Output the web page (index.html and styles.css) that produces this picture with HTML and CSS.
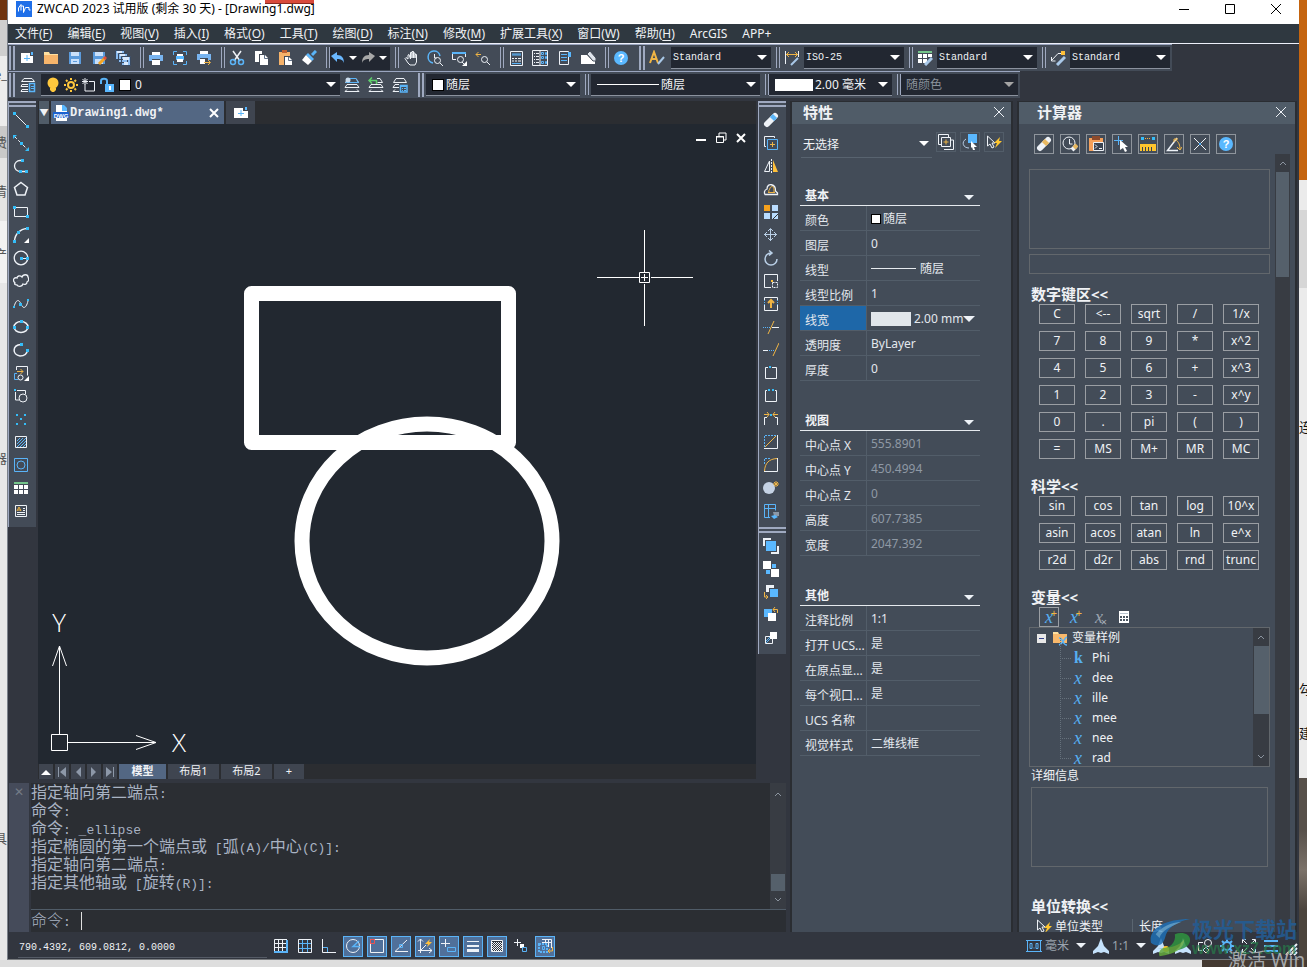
FILE: index.html
```html
<!DOCTYPE html>
<html lang="zh-CN">
<head>
<meta charset="utf-8">
<title>ZWCAD 2023</title>
<link rel="stylesheet" href="styles.css">
</head>
<body>
<div class="edge edge-left" aria-hidden="true">
  <span class="frag f1">e_</span><span class="frag f2">费</span><span class="frag f3">清</span><span class="frag f4">产</span><span class="frag f5">器</span><span class="frag f6">具</span>
</div>
<div class="window">
  <header class="titlebar">
    <svg class="logo" viewBox="0 0 16 16"><rect width="16" height="16" fill="#1f6fe8"/><path d="M2.500 10.500V7l2.500-3.500v6M5 5h2.500v6.500l2-5h3.500v2.500h1.500" stroke="#fff" fill="none"/></svg>
    <h1>ZWCAD 2023 试用版 (剩余 30 天) - [Drawing1.dwg]</h1>
    <span class="redmark"></span>
    <div class="winbtns">
      <button aria-label="最小化"><svg class="i dk" viewBox="0 0 16 16"><path d="M3 8.500h10"/></svg></button>
      <button aria-label="最大化"><svg class="i dk" viewBox="0 0 16 16"><path d="M3.500 3.500h9v9h-9z"/></svg></button>
      <button aria-label="关闭"><svg class="i dk" viewBox="0 0 16 16"><path d="M3 3l10 10M13 3L3 13"/></svg></button>
    </div>
  </header>
  <nav class="menubar">
    <button>文件(<u>F</u>)</button><button>编辑(<u>E</u>)</button><button>视图(<u>V</u>)</button><button>插入(<u>I</u>)</button><button>格式(<u>O</u>)</button><button>工具(<u>T</u>)</button><button>绘图(<u>D</u>)</button><button>标注(<u>N</u>)</button><button>修改(<u>M</u>)</button><button>扩展工具(<u>X</u>)</button><button>窗口(<u>W</u>)</button><button>帮助(<u>H</u>)</button><button>ArcGIS</button><button>APP+</button>
  </nav>

  <div class="toolrow">
    <div class="toolbar">
      <span class="grip"></span>
      <button class="t" aria-label="新建"><svg class="i" viewBox="0 0 16 16"><path class="fw" d="M2 3h9v3h3v7H2z"/><path class="fb" d="M12 2h2v3h-2z"/><path class="b" d="M8 5v6M5 8.500h6"/></svg></button>
      <button class="t" aria-label="打开"><svg class="i" viewBox="0 0 16 16"><path fill="#ffe0a0" stroke="none" d="M1 2h5l1 2h8v2H1z"/><path fill="#f7b56b" stroke="none" d="M1 5h14v9H1z"/></svg></button>
      <button class="t" aria-label="保存"><svg class="i" viewBox="0 0 16 16"><path fill="#5b9bdc" stroke="none" d="M2 2h12v12H2z"/><path fill="#c9e0fa" stroke="none" d="M4 2h8v4H4zM4 9h8v5H4z"/><path stroke="#5b9bdc" d="M6 11.500h4"/></svg></button>
      <button class="t" aria-label="另存为"><svg class="i" viewBox="0 0 16 16"><path fill="#5b9bdc" stroke="none" d="M2 2h12v12H2z"/><path fill="#c9e0fa" stroke="none" d="M4 2h8v4H4zM4 9h8v5H4z"/><path d="M8 14l6-6" stroke="#f5a623" stroke-width="3"/><path d="M13 9l2-2" stroke="#e05040" stroke-width="3"/></svg></button>
      <button class="t" aria-label="全部保存"><svg class="i" viewBox="0 0 16 16"><path fill="#8bbcf0" stroke="#3a4a60" d="M.5.5h9v9h-9zM3.500 3.500h9v9h-9zM6.500 6.500h9v9h-9z"/><path fill="#dcebfc" stroke="none" d="M2 1h5v2H2zM5 4h5v2H5zM8 7h6v3H8zM9 12h4v3H9z"/></svg></button>
      <span class="sep"></span>
      <button class="t" aria-label="打印"><svg class="i" viewBox="0 0 16 16"><path class="fw" d="M4 2h8v3H4zM4 10h8v5H4z"/><path fill="#78b4f0" stroke="none" d="M1 5h14v6h-3V9H4v2H1z"/></svg></button>
      <button class="t" aria-label="打印预览"><svg class="i" viewBox="0 0 16 16"><path class="b" d="M1.500 5V1.500H5M11 1.500h3.500V5M14.500 11v3.500H11M5 14.500H1.500V11"/><path class="fw" d="M5 4h6v2H5zM5 9h6v3H5z"/><path class="fb" d="M4 6h8v4h-1V9H5v1H4z"/></svg></button>
      <button class="t" aria-label="发布"><svg class="i" viewBox="0 0 16 16"><path class="fw" d="M4 1h8v3H4zM4 9h5v5H4z"/><path fill="#78b4f0" stroke="none" d="M1 4h14v6h-3V8H4v2H1z"/><path class="o" d="M8 12.500h6M12 10l2.500 2.500L12 15"/></svg></button>
      <span class="sep"></span>
      <button class="t" aria-label="剪切"><svg class="i" viewBox="0 0 16 16"><path d="M4 1l7 10M12 1L5 11" stroke-width="1.500"/><circle class="b" cx="4" cy="12" r="2.500" stroke-width="1.500"/><circle class="b" cx="12" cy="12" r="2.500" stroke-width="1.500"/></svg></button>
      <button class="t" aria-label="复制"><svg class="i" viewBox="0 0 16 16"><path class="fw" d="M2 1h7v3H6v8H2zM7 5h5l3 3v7H7z"/><path stroke="#64748a" d="M11.500 5v3.500H15"/></svg></button>
      <button class="t" aria-label="粘贴"><svg class="i" viewBox="0 0 16 16"><path fill="#f5b26a" stroke="none" d="M2 2h11v4H7v9H2z"/><path fill="#c06030" stroke="none" d="M5 0h5v3H5z"/><path class="fw" d="M8 7h4l3 3v5H8z"/><path stroke="#64748a" d="M11.500 7v3.500H15"/></svg></button>
      <button class="t" aria-label="特性匹配"><svg class="i" viewBox="0 0 16 16"><path d="M15 1l-4 4" class="b" stroke-width="3"/><path class="fb" d="M7 3l6 6-2 2-6-6z"/><path class="fw" d="M5 5l6 6-4 4-6-5z"/></svg></button>
      <span class="sep"></span>
      <div class="undo">
        <button aria-label="撤销"><svg class="i" viewBox="0 0 16 16"><path fill="#69b7ff" stroke="none" d="M1 6l6-4v3c5 0 7 3 7 8-1-3-3-4-7-4v3z"/></svg></button><button aria-label="撤销列表" class="tri"></button>
        <button aria-label="重做"><svg class="i" viewBox="0 0 16 16"><path fill="#a8a8a8" stroke="none" d="M15 6L9 2v3C4 5 2 8 2 13c1-3 3-4 7-4v3z"/></svg></button><button aria-label="重做列表" class="tri"></button>
      </div>
      <span class="sep"></span>
      <button class="t" aria-label="平移"><svg class="i" viewBox="0 0 16 16"><path d="M5 9L3 7.500l-1 1L5 13l2 2h5l1.500-3V4.500H12V8 3h-1.500v5V1.500H9V8 2.500H7.500V9L6 4.500 5 5z"/></svg></button>
      <button class="t" aria-label="实时缩放"><svg class="i" viewBox="0 0 16 16"><path class="b" d="M6 13A6 6 0 1 1 13 6" stroke-width="1.500"/><path d="M7.500 4v4h2"/><circle cx="10.500" cy="10.500" r="3"/><path d="M13 13l3 3"/></svg></button>
      <button class="t" aria-label="窗口缩放"><svg class="i" viewBox="0 0 16 16"><path class="b" d="M1 2.500h14M1 3.500h14"/><path d="M1.500 4v5.500H5M14.500 4v3"/><circle cx="9.500" cy="9.500" r="3"/><path d="M11 12l3 3"/><path class="fw" d="M16 11v5h-5z"/></svg></button>
      <button class="t" aria-label="上一视图"><svg class="i" viewBox="0 0 16 16"><path class="o" d="M1 4.500h5M3.500 2L1 4.500 3.500 7"/><circle cx="9.500" cy="9.500" r="3"/><path d="M12 12l3 3"/></svg></button>
      <span class="sep"></span>
      <button class="t" aria-label="特性"><svg class="i" viewBox="0 0 16 16"><path d="M2.500 1.500h12v14h-12z"/><path class="b" d="M4 4h9M4 5h9M4 13.500h9" /><path d="M4 8.500h2m1 0h2m1 0h3M4 11h2m1 0h2m1 0h3"/></svg></button>
      <button class="t" aria-label="设计中心"><svg class="i" viewBox="0 0 16 16"><path d="M.5.500h15v15H.5zM8 1v14"/><path d="M2 3.500h1m1 0h3M2 6.500h1m1 0h3M2 9.500h1m1 0h3M2 12.500h1m1 0h3"/><path class="b" d="M9.500 2.500v2h2v-2zM13.500 2.500v2h1v-2zM9.500 6.500v2h2v-2zM13.500 6.500v2h1v-2zM9.500 11.500v2h2v-2zM13.500 11.500v2h1v-2z"/></svg></button>
      <button class="t" aria-label="工具选项板"><svg class="i" viewBox="0 0 16 16"><path d="M3.500 1.500h9v13h-9z"/><path class="fb" d="M12 2h3v5h-3z"/><path class="b" d="M5 4.500h6M5 7.500h6M5 10.500h6"/></svg></button>
      <button class="t" aria-label="图纸集"><svg class="i" viewBox="0 0 16 16"><path class="fw" d="M1 5h6l5 5h3v4H1z"/><path fill="#dfe5ec" stroke="#434b57" d="M7 4l3-3 6 7v3h-3z"/></svg></button>
      <span class="sep"></span>
      <button class="t" aria-label="帮助"><svg class="i" viewBox="0 0 16 16"><circle class="fb" cx="8" cy="8" r="7"/><text x="8" y="12" class="q">?</text></svg></button>
      <span class="grip mid"></span>
      <span class="t"><svg class="i" viewBox="0 0 16 16"><path d="M1 13L5 2l4 11M3 9h5" class="o" stroke-width="2"/><path d="M9 14l6-7" stroke="#a9c8e8" stroke-width="2"/></svg></span>
      <label class="combo mono"><select aria-label="文字样式"><option>Standard</option></select></label>
      <span class="sep"></span>
      <span class="t"><svg class="i" viewBox="0 0 16 16"><path d="M1.500 1v13M14.500 1v6"/><path class="o" d="M2 4.500h12M5 2L2.500 4.500 5 7M11 2l2.500 2.500L11 7"/><path d="M7 15l7-7" stroke="#a9c8e8" stroke-width="2"/></svg></span>
      <label class="combo mono"><select aria-label="标注样式"><option>ISO-25</option></select></label>
      <span class="sep"></span>
      <span class="t"><svg class="i" viewBox="0 0 16 16"><path stroke="#74c48a" stroke-width="2" d="M1 2h14"/><path class="fw" d="M1 4h4v4H1zM6 4h4v4H6zM11 4h4v3h-4zM1 9h4v4H1zM6 9h4v4H6z"/><path d="M8 15l7-7" stroke="#a9c8e8" stroke-width="3"/></svg></span>
      <label class="combo mono"><select aria-label="表格样式"><option>Standard</option></select></label>
      <span class="sep"></span>
      <span class="t"><svg class="i" viewBox="0 0 16 16"><path class="fo" d="M11 1h4v4h-4z"/><path d="M11 3.500H8L2 10M1.500 7v4h4"/><path d="M7 15l8-8" stroke="#a9c8e8" stroke-width="3"/></svg></span>
      <label class="combo mono"><select aria-label="多重引线样式"><option>Standard</option></select></label>
    </div>
  </div>

  <div class="toolrow">
    <div class="toolbar">
      <span class="grip"></span>
      <button class="t w26" aria-label="图层特性"><svg class="i" viewBox="0 0 16 16"><path d="M4 1.500h8l2.500 3h-13zM8 7.500H2l-1 2h7M8 12.500H2l-1 2h7"/><path class="b" d="M9.500 6.500h5v8h-5z" stroke-width="1.500"/><path class="b" d="M11 9.500h3M11 11.500h3"/></svg></button>
      <div class="combo layer">
        <svg class="i" viewBox="0 0 16 16"><circle cx="8" cy="6" r="5.500" fill="#ffc83d" stroke="none"/><path d="M5 11h6v2l-2 2H7l-2-2z" fill="#ffc83d" stroke="none"/></svg>
        <svg class="i" viewBox="0 0 16 16"><circle cx="8" cy="8" r="3" stroke="#ffc83d" stroke-width="2"/><path stroke="#ffc83d" stroke-width="2" d="M8 1v2M8 13v2M1 8h2M13 8h2M3 3l1.500 1.500M11.500 11.500L13 13M13 3l-1.500 1.500M3 13l1.500-1.500"/></svg>
        <svg class="i" viewBox="0 0 16 16"><path d="M4 7.500V14h9.500V4.500H8M1 4.500h6M4 1v7M1.500 2l5 5M6.500 2l-5 5"/></svg>
        <svg class="i" viewBox="0 0 16 16"><path class="b" stroke-width="2" d="M2 7V4c0-3 6-3 6 0v3"/><path class="fb" d="M6 7h9v8H6z"/><path class="fw" d="M10 9h2v4h-2z"/></svg>
        <i class="swatch"></i>
        <select aria-label="图层"><option>0</option></select>
      </div>
      <button class="t" aria-label="图层置为当前"><svg class="i" viewBox="0 0 16 16"><path d="M4 1.500h8l2.500 4h-13zM1 10.500h14l-2-3H3zM3 12.500l-2 2h14l-2-2"/><path class="b" d="M5 1.500h7l2.500 4h-13"/><circle cx="4" cy="3" r="2.500" fill="#cde" stroke="none"/></svg></button>
      <button class="t" aria-label="上一图层"><svg class="i" viewBox="0 0 16 16"><path d="M9 1.500h3l2.500 4h-5M1 10.500h14l-2-3H3zM3 12.500l-2 2h14l-2-2"/><path stroke="#5fd06c" stroke-width="1.500" d="M1 3.500h7.500V7M4 .500l-3 3 3 3"/></svg></button>
      <button class="t" aria-label="图层状态"><svg class="i" viewBox="0 0 16 16"><path d="M4 1.500h8l2.500 4h-13zM7 7.500H3l-2 3h6M3 12.500l-2 2h6"/><path class="b" stroke-width="1.500" d="M8.500 8.500h6.500v6.500H8.500z"/><path class="b" d="M8 9.500h7M10 11.500h1m1 0h2M10 13.500h1m1 0h2"/></svg></button>
      <span class="grip mid"></span>
      <label class="combo cjk c154"><i class="swatch"></i><select aria-label="颜色"><option>随层</option></select></label>
      <span class="sep"></span>
      <label class="combo cjk c169"><i class="ltype"></i><select aria-label="线型"><option>随层</option></select></label>
      <span class="sep"></span>
      <label class="combo cjk c123"><i class="lwt"></i><select aria-label="线宽"><option>2.00 毫米</option></select></label>
      <span class="sep"></span>
      <label class="combo cjk c117 off"><select aria-label="打印样式" disabled><option>随颜色</option></select></label>
    </div>
  </div>

  <main class="main">
    <section class="left">
      <div class="work">
        <div class="vbar" role="toolbar" aria-label="绘图">
          <span class="hgrip"></span>
          <button aria-label="直线"><svg class="i" viewBox="0 0 16 16"><path d="M2 2l12 12"/><path class="fc" d="M0 0h3v3H0zM13 13h3v3h-3z"/></svg></button>
          <button aria-label="构造线"><svg class="i" viewBox="0 0 16 16"><path d="M1 1l14 14" stroke-dasharray="4 2"/><path class="fc" d="M0 0h4L0 4zM16 16h-4l4-4zM7 7h3v3H7z"/></svg></button>
          <button aria-label="多段线"><svg class="i" viewBox="0 0 16 16"><path d="M10 2.500H7a5 5 0 0 0 0 11h7" stroke-width="1.300"/><path class="fc" d="M8 1h3v3H8zM6 12h3v3H6zM12 12h3v3h-3z"/></svg></button>
          <button aria-label="多边形"><svg class="i" viewBox="0 0 16 16"><path d="M8 1.500L14.500 6.500 12 14H4L1.500 6.500z" stroke-width="1.500"/></svg></button>
          <button aria-label="矩形"><svg class="i" viewBox="0 0 16 16"><path d="M1.500 3.500h13v9h-13z"/><path class="fc" d="M0 2h3v3H0zM13 11h3v3h-3z"/></svg></button>
          <button aria-label="圆弧"><svg class="i" viewBox="0 0 16 16"><path d="M1.500 14C2 7 7 2 14 1.500" stroke-width="1.500"/><path class="fc" d="M0 13h3v3H0zM4 4h3v3H4zM13 0h3v3h-3z"/><path class="fw" d="M16 11v5h-5z"/></svg></button>
          <button aria-label="圆"><svg class="i" viewBox="0 0 16 16"><circle cx="8" cy="8" r="6.800" stroke-width="1.300"/><path d="M8 8.500h6"/><path class="fc" d="M7 7h3v3H7zM13 7h3v3h-3z"/></svg></button>
          <button aria-label="修订云线"><svg class="i" viewBox="0 0 16 16"><path stroke-width="1.300" d="M2 10C-1 7 1 4 4 5c0-2 3-3 5-1 1-3 6-3 6 0 1 2 1 4-1 5 0 2-2 3-4 2-1 3-5 3-6 1-2 0-3-1-2-2z"/></svg></button>
          <button aria-label="样条曲线"><svg class="i" viewBox="0 0 16 16"><path d="M1 11C3 3 6 3 8 8s5 5 7-3"/><path class="fc" d="M0 10h2v2H0zM6 7h3v3H6zM14 3h2v2h-2z"/></svg></button>
          <button aria-label="椭圆"><svg class="i" viewBox="0 0 16 16"><ellipse cx="8" cy="8" rx="7" ry="5.500" stroke-width="1.500"/><path class="fc" d="M7 1h3v3H7zM0 7h3v3H0zM13 7h3v3h-3z"/></svg></button>
          <button aria-label="椭圆弧"><svg class="i" viewBox="0 0 16 16"><path d="M8 2.500C-1 3-1 13 7 14c4 0 7-2 7.500-6" stroke-width="1.500"/><path class="fc" d="M7 1h3v3H7zM13 7h3v3h-3z"/></svg></button>
          <button aria-label="插入块"><svg class="i" viewBox="0 0 16 16"><path d="M3.500 5V1.500h11v9"/><path class="b" d="M4 8.500H1.500v6H5"/><path class="o" d="M4 6.500h6M7.500 4L10 6.500 7.500 9"/><circle cx="7.500" cy="12.500" r="2.500"/><path class="fw" d="M16 11v5h-5z"/></svg></button>
          <button aria-label="创建块"><svg class="i" viewBox="0 0 16 16"><path d="M2.500 4v8H6M4 2.500h8.500V6"/><circle cx="10" cy="10" r="4"/><path class="fc" d="M1 1h2v2H1z"/></svg></button>
          <button aria-label="点"><svg class="i" viewBox="0 0 16 16"><path class="fc" d="M3 3h2v2H3zM11 3h2v2h-2zM7 7h2v2H7zM3 12h2v2H3zM11 12h2v2h-2z"/></svg></button>
          <button aria-label="图案填充"><svg class="i" viewBox="0 0 16 16"><path class="b" d="M4 7l3-3M4 10l6-6M4 13l9-9M7 13l6-6M10 13l3-3"/><path d="M2.500 2.500h11v11h-11z"/></svg></button>
          <button aria-label="面域"><svg class="i" viewBox="0 0 16 16"><path class="b" d="M1.500 1.500h13v13h-13z"/><circle class="b" cx="8" cy="8" r="4"/></svg></button>
          <button aria-label="表格"><svg class="i" viewBox="0 0 16 16"><path stroke="#74c48a" stroke-width="2" d="M1 3h14"/><path class="fw" d="M1 5h4v4H1zM6 5h4v4H6zM11 5h4v4h-4zM1 10h4v4H1zM6 10h4v4H6zM11 10h4v4h-4z"/></svg></button>
          <button aria-label="多行文字"><svg class="i" viewBox="0 0 16 16"><path d="M2.500 2.500h11v11h-11z"/><path class="o" d="M4 8l2-4 2 4M5 7h3" /><path d="M10 5.500h2M10 7.500h2M4 9.500h8M4 11.500h8"/></svg></button>
        </div>

        <div class="doc">
          <div class="doctabs">
            <button class="dlist" aria-label="文档列表">▼</button>
            <div class="dtab"><svg class="i" viewBox="0 0 16 16"><path class="fw" d="M3 0h7l4 4v12H3z"/><path class="fb" d="M9 0h2l3 3v3H9z"/><path fill="#1c62d0" stroke="none" d="M0 7h16v6H0z"/><text x="8" y="12.500" class="dwg">DWG</text></svg><span>Drawing1.dwg*</span><button aria-label="关闭文档"><svg class="i" viewBox="0 0 16 16"><path stroke="#fff" stroke-width="2" d="M4 4l8 8M12 4l-8 8"/></svg></button></div>
            <button class="dnew" aria-label="新建文档"><svg class="i" viewBox="0 0 16 16"><path class="fw" d="M1 3h9v3h5v7H1z"/><path class="fb" d="M12 2h2v3h-2z"/><path class="b" d="M8 5v6M5 8.500h6"/></svg></button>
          </div>
          <div class="canvas">
            <svg class="drawing" role="img" aria-label="绘图区">
              <rect x="213.500" y="169.500" width="257" height="149" stroke-width="15" stroke-linejoin="round"/>
              <ellipse cx="389" cy="417" rx="125" ry="117" stroke-width="15"/>
              <path d="M559 153.500h42M613 153.500h42M606.500 106v42M606.500 160v42M601.500 148.500h10v10h-10zM603 153.500h7M606.500 150v7"/>
              <path d="M13.500 610.500h16v16h-16zM21.500 610v-88M14.500 542l7-20 7 20M30 618.500h88M98 611.500l20 7-20 7"/>
              <text x="21" y="508">Y</text><text x="141" y="628">X</text>
            </svg>
            <div class="mdi">
              <button aria-label="最小化视口"><svg class="i" viewBox="0 0 16 16"><path stroke="#fff" stroke-width="2" d="M3 10h10"/></svg></button>
              <button aria-label="还原视口"><svg class="i" viewBox="0 0 16 16"><path stroke="#fff" d="M6 6V3h7v7h-2M3 6.500h7.500v6H3.500V6M3 7h8"/></svg></button>
              <button aria-label="关闭视口"><svg class="i" viewBox="0 0 16 16"><path stroke="#fff" stroke-width="2" d="M4 4l8 8M12 4l-8 8"/></svg></button>
            </div>
          </div>
          <div class="layouts">
            <button class="s" aria-label="展开"><svg class="i" viewBox="0 0 16 16"><path class="fw" d="M3 11l5-5 5 5z"/></svg></button>
            <button class="s g" aria-label="首个"><svg class="i" viewBox="0 0 16 16"><path d="M4.500 3v10"/><path class="fg" d="M12 3v10L6 8z"/></svg></button>
            <button class="s g" aria-label="上一个"><svg class="i" viewBox="0 0 16 16"><path class="fg" d="M11 3v10L6 8z"/></svg></button>
            <button class="s g" aria-label="下一个"><svg class="i" viewBox="0 0 16 16"><path class="fg" d="M5 3v10l5-5z"/></svg></button>
            <button class="s g" aria-label="末个"><svg class="i" viewBox="0 0 16 16"><path d="M11.500 3v10"/><path class="fg" d="M4 3v10l6-5z"/></svg></button>
            <button class="lt on">模型</button><button class="lt">布局1</button><button class="lt">布局2</button><button class="lt plus">+</button>
          </div>
        </div>

        <div class="vcol">
          <div class="vbar" role="toolbar" aria-label="修改">
            <span class="hgrip"></span>
            <button aria-label="删除"><svg class="i" viewBox="0 0 16 16"><path d="M4 12l8-8" stroke-width="6" stroke-linecap="round"/><path class="b" d="M9 7l3-3" stroke-width="6"/></svg></button>
            <button aria-label="复制对象"><svg class="i" viewBox="0 0 16 16"><path d="M3 11.500H1.500v-10h10V3"/><path class="b" d="M4.500 4.500h10v10h-10z"/><path class="o" d="M9.500 7v5M7 9.500h5"/></svg></button>
            <button aria-label="镜像"><svg class="i" viewBox="0 0 16 16"><path d="M6.500 3v10.500h-5z"/><path d="M8.500 1v14" stroke-dasharray="2 1"/><path class="fo" d="M10 2v12h5z"/></svg></button>
            <button aria-label="偏移"><svg class="i" viewBox="0 0 16 16"><path stroke-width="1.300" d="M2 13.500h12.500V12l-2-2C13 3 4 1 4 8c-3 1-3 4-2 5.500z"/><path class="o" d="M5 11.500h7M6 11c-1-2 1-2 1-4 1-2 4-2 4 1v3"/></svg></button>
            <button aria-label="阵列"><svg class="i" viewBox="0 0 16 16"><path fill="#f5a11d" stroke="none" d="M1 1h6v6H1z"/><path fill="#b9dcff" stroke="none" d="M9 1h6v6H9zM1 9h6v6H1zM9 9h6v6H9z"/><path stroke="#333" d="M10 15l5-5"/></svg></button>
            <button aria-label="移动"><svg class="i" viewBox="0 0 16 16"><path class="l" d="M7.500 2v12M1 7.500h13M5 4l2.500-2.500L10 4M5 11l2.500 2.500L10 11M4 5L1.500 7.500 4 10M11 5l2.500 2.500L11 10"/></svg></button>
            <button aria-label="旋转"><svg class="i" viewBox="0 0 16 16"><path class="l" stroke-width="1.500" d="M8 3a6 6 0 1 0 6 6M6 .500L9 3 6 5.500"/></svg></button>
            <button aria-label="缩放"><svg class="i" viewBox="0 0 16 16"><path d="M8 14.500H1.500v-13h13V8"/><path d="M9.500 9.500h5v5h-5z" stroke-dasharray="2 1"/><path class="fo" d="M8 7h2v2H8z"/></svg></button>
            <button aria-label="拉伸"><svg class="i" viewBox="0 0 16 16"><path d="M1.500 4V1.500h13V4M1.500 9v5.500h13V9"/><path class="b" stroke-dasharray="1 1" d="M1.500 4v5M14.500 4v5"/><path class="o" stroke-width="2" d="M8 12V5M5 7l3-3 3 3"/></svg></button>
            <button aria-label="修剪"><svg class="i" viewBox="0 0 16 16"><path class="b" stroke-dasharray="1 1" d="M0 8.500h7"/><path d="M9 8.500h7"/><path class="o" d="M5 15l6-13"/></svg></button>
            <button aria-label="延伸"><svg class="i" viewBox="0 0 16 16"><path d="M0 8.500h5"/><path class="b" stroke-dasharray="1 1" d="M6 8.500h5"/><path class="o" d="M10 14l6-13"/></svg></button>
            <button aria-label="打断于点"><svg class="i" viewBox="0 0 16 16"><path d="M5 2.500H2.500v11h11v-11H9"/><path class="fc" d="M6 1h2v2H6z"/></svg></button>
            <button aria-label="打断"><svg class="i" viewBox="0 0 16 16"><path d="M4 2.500H2.500v11h11v-11H12"/><path class="fc" d="M5 1h2v2H5zM9 1h2v2H9z"/></svg></button>
            <button aria-label="合并"><svg class="i" viewBox="0 0 16 16"><path d="M1.500 14V6.500H4M14.500 14V6.500H12"/><path class="o" d="M1 3.500h5M4 1l2 2.500L4 6M15 3.500h-5M12 1l-2 2.500L12 6"/><path class="fc" d="M7 3h2v2H7z"/></svg></button>
            <button aria-label="倒角"><svg class="i" viewBox="0 0 16 16"><path d="M14.500 1v13.500H1"/><path class="b" stroke-dasharray="2 1" d="M1.500 13V1.500H14"/><path class="o" d="M2 13L13 2"/></svg></button>
            <button aria-label="圆角"><svg class="i" viewBox="0 0 16 16"><path d="M14.500 1v13.500H1"/><path class="b" stroke-dasharray="2 1" d="M1.500 7V1.500H7"/><path class="o" d="M1.500 14C2 6 6 2 14 1.500"/></svg></button>
            <button aria-label="分解"><svg class="i" viewBox="0 0 16 16"><circle cx="6" cy="8" r="6" fill="#c5d2e4" stroke="none"/><path class="o" d="M13 1v6M10 4h6M11 2l4 4M15 2l-4 4"/></svg></button>
            <button aria-label="编辑阵列"><svg class="i" viewBox="0 0 16 16"><path class="b" d="M1.500 1.500h11v6M1.500 1.500v13H7M5.500 2v12M2 5.500h10"/><path fill="#8d98a6" stroke="none" d="M10 9h6v4h-5z"/><path class="fb" d="M8 13l4-1 3 2-4 2z"/></svg></button>
          </div>
          <div class="vbar" role="toolbar" aria-label="绘图顺序">
            <span class="hgrip"></span>
            <button aria-label="前置"><svg class="i" viewBox="0 0 16 16"><path stroke-width="2" d="M8 1H1v7M15 8v7H8"/><path class="fb" d="M3 3h10v10H3z"/></svg></button>
            <button aria-label="后置"><svg class="i" viewBox="0 0 16 16"><path class="fw" d="M0 0h8v8H0zM8 8h8v8H8z"/><path class="fb" d="M9 3h4v4H9zM3 9h4v4H3z"/></svg></button>
            <button aria-label="置于对象之上"><svg class="i" viewBox="0 0 16 16"><path stroke-width="3" d="M11 2.500H4.500V8"/><path class="fb" d="M7 5h8v8H7z"/><path class="o" d="M1.500 8v5H5M3 11l2 2-2 2"/></svg></button>
            <button aria-label="置于对象之下"><svg class="i" viewBox="0 0 16 16"><path class="fb" d="M1 2h8v8H1z"/><path class="fw" d="M5 6h8v8H5z"/><path class="o" d="M14.500 6V2.500H10M12 0l-2 2.500L12 5"/></svg></button>
            <button aria-label="注释前置"><svg class="i" viewBox="0 0 16 16"><path d="M2.500 6.500h7v7h-7z"/><path class="b" d="M3 11l4-4M3 13l6-6"/><path class="fw" d="M7 2h7v7H7z"/></svg></button>
          </div>
        </div>
      </div>

      <div class="command">
        <button class="cclose" aria-label="关闭命令行">✕</button>
        <div class="cbody">
          <div class="chist">
            <p>指定轴向第二端点<b>:</b></p>
            <p>命令<b>:</b></p>
            <p>命令<b>: _ellipse</b></p>
            <p>指定椭圆的第一个端点或<b> [</b>弧<b>(A)/</b>中心<b>(C)]:</b></p>
            <p>指定轴向第二端点<b>:</b></p>
            <p>指定其他轴或<b> [</b>旋转<b>(R)]:</b></p>
          </div>
          <div class="cscroll"><svg class="i" viewBox="0 0 16 16"><path d="M5 10l3-3 3 3"/></svg><span></span><svg class="i" viewBox="0 0 16 16"><path d="M5 6l3 3 3-3"/></svg></div>
          <div class="cprompt"><label for="cmd">命令<b>:</b></label><i class="caret"></i><input id="cmd" type="text"></div>
        </div>
      </div>
    </section>

    <section class="panel props">
      <header><h2>特性</h2><button aria-label="关闭特性"><svg class="i" viewBox="0 0 16 16"><path d="M3 3l10 10M13 3L3 13"/></svg></button></header>
      <div class="selrow">
        <label class="combo plain"><select aria-label="选择"><option>无选择</option></select></label>
        <button aria-label="切换添加"><svg class="i" viewBox="0 0 16 16"><path d="M3 10.500H.5v-10h10V3M6 15.500h9.500V6H13"/><path d="M3.500 3.500h9v9h-9z"/><path class="o" d="M8 5.500v5M5.500 8h5"/></svg></button>
        <button aria-label="选择对象"><svg class="i" viewBox="0 0 16 16"><path class="fb" d="M6 0h9v9H6z"/><path class="l" d="M4 5c-5 3-3 9 3 9"/><path class="fw" d="M9 7l6 6h-3l1 3h-2l-1-3-1 1z"/></svg></button>
        <button aria-label="快速选择"><svg class="i" viewBox="0 0 16 16"><path d="M1.500 2v10l2.500-2 2 4 2-1-2-4h3z"/><path fill="#ffc62e" stroke="none" d="M14 3L8 9h3l-2 5 7-7h-3z"/></svg></button>
      </div>
      <div class="sect first"><h3>基本</h3><button class="tri" aria-label="折叠基本"></button></div>
      <table>
        <tr><th>颜色</th><td><i class="swatch"></i>随层</td></tr>
        <tr><th>图层</th><td>0</td></tr>
        <tr><th>线型</th><td><i class="pline"></i>随层</td></tr>
        <tr><th>线型比例</th><td>1</td></tr>
        <tr><th class="sel">线宽</th><td class="lw"><i class="pwt"></i>2.00 mm<i class="tri"></i></td></tr>
        <tr><th>透明度</th><td>ByLayer</td></tr>
        <tr><th>厚度</th><td>0</td></tr>
      </table>
      <div class="sect"><h3>视图</h3><button class="tri" aria-label="折叠视图"></button></div>
      <table class="dim">
        <tr><th>中心点 X</th><td>555.8901</td></tr>
        <tr><th>中心点 Y</th><td>450.4994</td></tr>
        <tr><th>中心点 Z</th><td>0</td></tr>
        <tr><th>高度</th><td>607.7385</td></tr>
        <tr><th>宽度</th><td>2047.392</td></tr>
      </table>
      <div class="sect"><h3>其他</h3><button class="tri" aria-label="折叠其他"></button></div>
      <table>
        <tr><th>注释比例</th><td>1:1</td></tr>
        <tr><th>打开 UCS...</th><td>是</td></tr>
        <tr><th>在原点显...</th><td>是</td></tr>
        <tr><th>每个视口...</th><td>是</td></tr>
        <tr><th>UCS 名称</th><td></td></tr>
        <tr><th>视觉样式</th><td>二维线框</td></tr>
      </table>
    </section>

    <section class="panel calc">
      <header><h2>计算器</h2><button aria-label="关闭计算器"><svg class="i" viewBox="0 0 16 16"><path d="M3 3l10 10M13 3L3 13"/></svg></button></header>
      <div class="calcrow">
        <div class="calcbody">
          <div class="cbtns">
            <button aria-label="清除"><svg class="i" viewBox="0 0 16 16"><path d="M4 12l8-8" stroke-width="6" stroke-linecap="round"/><path d="M8 8l3-3" stroke="#e8b860" stroke-width="6"/></svg></button>
            <button aria-label="清除历史"><svg class="i" viewBox="0 0 16 16"><circle cx="7" cy="7" r="6"/><path d="M7.500 3v5h3"/><path d="M10 14l4-4" stroke-width="4"/><path d="M12 12l3-3" stroke="#e8b860" stroke-width="4"/></svg></button>
            <button aria-label="粘贴到命令行"><svg class="i" viewBox="0 0 16 16"><path fill="#f5a05a" stroke="none" d="M1 2h14v13H1z"/><path fill="#8c4a2c" stroke="none" d="M4 0h8v4H4z"/><path fill="#3a4452" d="M5.500 6.500h10v8h-10z"/><path d="M7 8.500l2 2-2 2M11 12.500h3"/></svg></button>
            <button aria-label="获取坐标"><svg class="i" viewBox="0 0 16 16"><path class="b" d="M4.500 0v9M0 4.500h9"/><path class="fw" d="M6 4l8 7h-3l2 4-2 1-2-4-3 2z"/></svg></button>
            <button aria-label="两点距离"><svg class="i" viewBox="0 0 16 16"><path class="fc" d="M1 1h3v3H1zM12 1h3v3h-3z"/><path class="o" stroke-dasharray="1 1" d="M5 2.500h6"/><path fill="#ffc62e" stroke="none" d="M0 8h16v7H0z"/><path stroke="#384250" d="M2.500 11v4M5.500 11v4M8.500 11v4M11.500 11v4"/></svg></button>
            <button aria-label="角度"><svg class="i" viewBox="0 0 16 16"><path d="M11 2L1.500 14.500H12" stroke-width="1.500"/><path class="o" d="M9 3.500c4 2 5 6 5 10M8 6V3h4M11 11l3 3 2-3"/></svg></button>
            <button aria-label="交点"><svg class="i" viewBox="0 0 16 16"><path d="M2 2l12 12M14 2L2 14"/><path class="fb" d="M7 7h2v2H7z"/></svg></button>
            <button aria-label="计算器帮助"><svg class="i" viewBox="0 0 16 16"><circle class="fb" cx="8" cy="8" r="7"/><text x="8" y="12" class="q">?</text></svg></button>
          </div>
          <textarea class="box hist" aria-label="历史"></textarea>
          <input class="box expr" type="text" aria-label="表达式">
          <h3>数字键区&lt;&lt;</h3>
          <div class="keys">
            <button>C</button><button>&lt;--</button><button>sqrt</button><button>/</button><button>1/x</button>
            <button>7</button><button>8</button><button>9</button><button>*</button><button>x^2</button>
            <button>4</button><button>5</button><button>6</button><button>+</button><button>x^3</button>
            <button>1</button><button>2</button><button>3</button><button>-</button><button>x^y</button>
            <button>0</button><button>.</button><button>pi</button><button>(</button><button>)</button>
            <button>=</button><button>MS</button><button>M+</button><button>MR</button><button>MC</button>
          </div>
          <h3 class="gap">科学&lt;&lt;</h3>
          <div class="keys">
            <button>sin</button><button>cos</button><button>tan</button><button>log</button><button>10^x</button>
            <button>asin</button><button>acos</button><button>atan</button><button>ln</button><button>e^x</button>
            <button>r2d</button><button>d2r</button><button>abs</button><button>rnd</button><button>trunc</button>
          </div>
          <h3 class="gap">变量&lt;&lt;</h3>
          <div class="vbtns">
            <button class="on" aria-label="新建变量"><em>x</em><sup>+</sup></button><button aria-label="编辑变量"><em>x</em><sup>+</sup></button><button class="dis" aria-label="删除变量"><em>x</em><sub>×</sub></button>
            <button aria-label="返回变量"><svg class="i" viewBox="0 0 16 16"><path class="fw" d="M3 2h10v12H3z"/><path stroke="#4a5560" stroke-width="2" stroke-dasharray="2 1" d="M4 8h8M4 11h8"/><path stroke="#b9c4cf" d="M4 4.500h8"/></svg></button>
          </div>
          <div class="tree">
            <ul>
              <li class="root"><i class="minus"></i><svg class="i" viewBox="0 0 16 16"><path fill="#ffe0a0" stroke="none" d="M1 2h5l1 2H1z"/><path fill="#f9b96c" stroke="none" d="M1 4h14v9H1z"/><path class="b" stroke-width="1.500" d="M7 8c4-1 3 7 8 7M15 7c-3 1-4 7-8 8"/></svg>变量样例</li>
              <li><em class="k">k</em>Phi</li><li><em>x</em>dee</li><li><em>x</em>ille</li><li><em>x</em>mee</li><li><em>x</em>nee</li><li><em>x</em>rad</li>
            </ul>
            <div class="tscroll"><svg class="i" viewBox="0 0 16 16"><path d="M5 10l3-3 3 3"/></svg><span></span><svg class="i" viewBox="0 0 16 16"><path d="M5 6l3 3 3-3"/></svg></div>
          </div>
          <label class="dlabel" for="detail">详细信息</label>
          <textarea class="box detail" id="detail"></textarea>
          <h3 class="conv">单位转换&lt;&lt;</h3>
          <div class="unitrow"><svg class="i" viewBox="0 0 16 16"><path d="M1.500 1v10l2.500-2 2 4 2-1-2-4h3z"/><path fill="#ffc62e" stroke="none" d="M14 3L8 9h3l-2 5 7-7h-3z"/></svg><span>单位类型</span><span class="len">长度</span></div>
        </div>
        <div class="bigscroll"><svg class="i" viewBox="0 0 16 16"><path d="M5 10l3-3 3 3"/></svg><span></span></div>
      </div>
    </section>
  </main>

  <footer class="status">
    <output class="coords">790.4392, 609.0812, 0.0000</output>
    <div class="toggles">
      <button aria-label="捕捉"><svg class="i" viewBox="0 0 16 16"><path d="M1.500 14V1.500H14M1 5.500h13M1 9.500h13M5.500 1v13M9.500 1v13M13.500 1v13"/><path class="b" stroke-width="2" d="M1 14h13V2"/></svg></button>
      <button aria-label="栅格"><svg class="i" viewBox="0 0 16 16"><path class="b" d="M1 5.500h14M1 10.500h14M5.500 1v14M10.500 1v14"/><path d="M1.500 1.500h13v13h-13z"/></svg></button>
      <button aria-label="正交"><svg class="i" viewBox="0 0 16 16"><path d="M1.500 1v13.500H15"/><path class="b" d="M2 9.500h4.500V14"/></svg></button>
      <button class="on" aria-label="极轴"><svg class="i" viewBox="0 0 16 16"><circle cx="8" cy="8" r="6.500"/><path class="b" stroke-width="1.500" d="M14 3L8 8.500h7"/></svg></button>
      <button class="on" aria-label="对象捕捉"><svg class="i" viewBox="0 0 16 16"><path d="M1.500 1.500h13v13h-13z"/><path fill="#50709a" stroke="#f05050" d="M1.500 1.500h4v4h-4z"/></svg></button>
      <button class="on" aria-label="对象追踪"><svg class="i" viewBox="0 0 16 16"><path d="M14 2L2 13.500h13"/><path class="b" d="M6.500 6.500h3v3h-3z"/></svg></button>
      <button class="on" aria-label="动态UCS"><svg class="i" viewBox="0 0 16 16"><path d="M3.500 15V1M1 3.500L3.500 1 6 3.500M1 12.500h14M12 10l3 2.500-3 2.500M3 13l6-6"/><path class="fo" d="M13 1L8 6h3l-1 3 5-5h-3z"/></svg></button>
      <button class="on" aria-label="动态输入"><svg class="i" viewBox="0 0 16 16"><path d="M4.500 1v8M0 5.500h9"/><path class="b" d="M6.500 9.500h8v4h-8z"/></svg></button>
      <button class="on" aria-label="显示线宽"><svg class="i" viewBox="0 0 16 16"><path d="M2 3.500h12"/><path stroke-width="2" d="M2 8h12"/><path stroke-width="3" d="M2 12.500h12"/></svg></button>
      <button class="on" aria-label="透明度"><svg class="i" viewBox="0 0 16 16"><path fill="#2d323a" d="M2.500 2.500h11v11h-11z"/><path stroke-dasharray="1 1" d="M3 4.500h10M3 6.500h10M3 8.500h10M3 10.500h10M3 12.500h10"/><path stroke-dasharray="1 1" d="M4 5.500h9M4 7.500h9M4 9.500h9M4 11.500h9"/></svg></button>
      <button aria-label="选择循环"><svg class="i" viewBox="0 0 16 16"><path d="M4.500 1v7M1 4.500h7"/><path class="fw" d="M7 6h4v4H7z"/><path class="b" d="M9.500 9.500h4v4h-4z"/></svg></button>
      <button class="on" aria-label="注释监视"><svg class="i" viewBox="0 0 16 16"><path d="M5 1.500h9.500V10M8.500 1v4M11.500 1v8M5 4.500h9"/><path class="b" stroke-width="2" stroke-dasharray="2 1" d="M2 6h8v8H2z"/><path class="b" d="M5.500 8.500h2v3h-2z"/><path class="o" d="M15.500 9v4H11M13 11l-2 2 2 2"/></svg></button>
    </div>
    <div class="sright">
      <button><svg class="i" viewBox="0 0 16 16"><path class="b" d="M0 2.500h16M0 13.500h16M1.500 2v12M14.500 2v12M4 5.500v5h2v-5zM10 5.500v5h2v-5zM7.500 10h1"/></svg>毫米</button><i class="tri"></i>
      <button class="ann"><svg class="i" viewBox="0 0 16 16"><path fill="#c5e2fc" stroke="none" d="M8 0l3 8 5 5v3l-5-2-3 1-3-1-5 2v-3l5-5z"/></svg>1:1</button><i class="tri"></i>
      <button aria-label="注释可见"><svg class="i" viewBox="0 0 16 16"><path fill="#c5e2fc" stroke="none" d="M8 0l3 8 5 5v3l-5-2-3 1-3-1-5 2v-3l5-5z"/><circle cx="13" cy="11" r="3" fill="#ffc62e" stroke="none"/></svg></button>
      <button aria-label="自动缩放"><svg class="i" viewBox="0 0 16 16"><path fill="#c5e2fc" stroke="none" d="M8 0l3 8 5 5v3l-5-2-3 1-3-1-5 2v-3l5-5z"/></svg></button>
      <button aria-label="隔离"><svg class="i" viewBox="0 0 16 16"><path d="M6 4.500H1.500v8H5"/><circle cx="11" cy="5" r="3.500"/><path d="M9 9l3 3-3 3-3-3z"/></svg></button>
      <button aria-label="设置"><svg class="i" viewBox="0 0 16 16"><circle class="b" cx="8" cy="8" r="4" stroke-width="2"/><path class="b" stroke-width="2" d="M8 1v3M8 12v3M1 8h3M12 8h3M3 3l2 2M11 11l2 2M13 3l-2 2M3 13l2-2"/></svg></button>
      <button aria-label="全屏"><svg class="i" viewBox="0 0 16 16"><path d="M1.500 5V1.500H5M11 1.500h3.500V5M14.500 11v3.500H11M5 14.500H1.500V11M2 2l4 4M14 2l-4 4M14 14l-4-4M2 14l4-4"/></svg></button>
      <button aria-label="菜单"><svg class="i" viewBox="0 0 16 16"><path class="b" stroke-width="2" d="M1 3h14M1 8h14M1 13h14"/></svg></button>
      <svg class="i sizer" viewBox="0 0 16 16"><path d="M3 15L14 4M7 15l7-7M11 15l3-3" stroke-width="2"/></svg>
    </div>
  </footer>
</div>
<div class="edge edge-right" aria-hidden="true"><span class="frag r1">连</span><span class="frag r2">勾</span><span class="frag r3">建</span></div>
<div class="bottomedge" aria-hidden="true"></div>
<div class="mark" aria-hidden="true">
  <svg viewBox="0 0 44 42"><path d="M1 26C-2 12 14 1 42 1 26 4 18 11 16 20c-2 8-8 12-15 6z" fill="#1f6fb4"/><path d="M6 17C12 9 22 5 33 4 22 9 12 13 10 21z" fill="#60a5d4"/><path d="M8 32c10 2 20-5 18-15 8-3 16 0 16 6 0 9-14 14-34 9z" fill="#2f9340"/><path d="M10 40c16-2 26-8 26-18-4 6-11 8-18 9-6 0-10 4-8 9z" fill="#63a83c"/></svg>
  <div><strong>极光下载站</strong><span>www.xz7.com</span></div>
</div>
<div class="activate" aria-hidden="true">激活 Win</div>
</body>
</html>
```

FILE: styles.css
```css
* { box-sizing: border-box; }
body {
  margin: 0;
  height: 100vh;
  display: grid;
  grid-template-columns: 8px minmax(0, 1fr) 8px;
  grid-template-rows: minmax(0, 1fr) 7px;
  position: relative;
  overflow: hidden;
  font: 12px/16px "Noto Sans", "Noto Sans CJK SC", sans-serif;
  color: #f0f2f5;
}
button, select, input, textarea { font: inherit; color: inherit; }
button { background: none; border: 0; padding: 0; display: flex; align-items: center; justify-content: center; }
h1, h2, h3, p, ul { margin: 0; padding: 0; font-size: inherit; font-weight: normal; }
i, em { font-style: normal; }
.i { width: 16px; height: 16px; flex: none; fill: none; stroke: #eef2f7; stroke-width: 1; display: block; }
.dk { stroke: #000; }
.l { stroke: #b9cfe6; }
.b { stroke: #5ab4f8; }
.o { stroke: #f0b545; }
.fw { fill: #fff; stroke: none; }
.fb { fill: #5ab8ff; stroke: none; }
.fo { fill: #ffc03a; stroke: none; }
.fc { fill: #35bdf8; stroke: none; }
.fg { fill: #8d98a8; stroke: none; }
.q { fill: #fff; stroke: none; font: bold 11px "Liberation Sans", sans-serif; text-anchor: middle; }
.dwg { fill: #fff; stroke: none; font: bold 6px "Liberation Sans", sans-serif; text-anchor: middle; }

/* Desktop visible around the window */
.edge { position: relative; overflow: hidden; color: #555; }
.edge-left { background: linear-gradient(#6f3410 0 20px, #cfcfcf 20px 56px, #ececec 56px 126px, #c9c9c9 126px 158px, #e4e4e4 158px 221px, #f2f2f2 221px 283px, #e7e7e7 283px); border-right: 1px solid #7b818a; }
.edge-right { background: linear-gradient(#c4640f 0 180px, #ebebeb 180px 210px, #d6d6d6 210px 288px, #ebebeb 288px 778px, #57504a 778px 830px, #7b7269 870px, #4b443d 910px); color: #111; }
.bottomedge { grid-column: 1 / -1; background: linear-gradient(90deg, #dedede 0 1202px, #443a32 1202px); }
.frag { position: absolute; right: 0; font-size: 13px; }
.edge-right .frag { right: auto; left: 0; }
.f1 { top: 66px; } .f2 { top: 134px; } .f3 { top: 183px; } .f4 { top: 246px; } .f5 { top: 450px; } .f6 { top: 830px; }
.r1 { top: 419px; } .r2 { top: 681px; } .r3 { top: 725px; }

.window { display: flex; flex-direction: column; min-height: 0; background: #32363f; border-bottom: 1px solid #7a7d80; }
.titlebar { height: 24px; background: #fff; color: #000; display: flex; align-items: center; padding: 0 0 7px 8px; gap: 5px; position: relative; flex: none; }
.logo { width: 16px; height: 16px; }
.redmark { position: absolute; left: 257px; top: 0; width: 49px; height: 4px; background: #d84a3c; border-bottom: 1px solid #8a2a20; }
.winbtns { margin-left: auto; display: flex; }
.winbtns button { width: 46px; height: 17px; }
.menubar { height: 20px; background: #2f3840; border-bottom: 1px solid #eef0fa; display: flex; gap: 15px; padding-left: 7px; flex: none; }
.menubar button { white-space: nowrap; }
.menubar u { text-underline-offset: 2px; }

.toolrow { height: 27px; display: flex; flex: none; }
.toolbar { display: flex; align-items: center; background: #434b57; border-top: 1px solid #9aa5bf; padding-right: 2px; }
.grip { width: 6px; align-self: stretch; margin: 1px 0 1px 1px; border: solid #9fa9c0; border-width: 0 2px; flex: none; }
.grip.mid { margin-left: 6px; }
.sep { width: 4px; margin: 2px 0 3px 5px; align-self: stretch; border: solid #9fa9c0; border-width: 0 1px; flex: none; }
.t { width: 24px; height: 24px; flex: none; display: flex; align-items: center; justify-content: center; }
.t.w26 { width: 26px; }
.undo { display: flex; align-items: center; width: 60px; height: 23px; background: #222731; }
.undo button { width: 16px; height: 23px; flex: none; }
.undo .tri { width: 14px; }
.tri::before { content: ""; border: solid transparent; border-width: 5px 5px 0; border-top-color: #eef2f7; display: block; }
.undo .tri::before { border-width: 4px 4px 0; border-top-color: #fff; }
.combo { position: relative; display: flex; align-items: center; height: 22px; background: #222731; border-bottom: 1px solid #8b929e; width: 100px; }
.combo select { appearance: none; background: none; border: 0; outline: 0; flex: 1; min-width: 0; height: 20px; padding: 0 16px 0 2px; opacity: 1; }
.combo::after { content: ""; position: absolute; right: 4px; top: 8px; border: solid transparent; border-width: 5px 5px 0; border-top-color: #fff; pointer-events: none; }
.grip.mid + .t { margin-right: 2px; }
.mono { font-family: "Liberation Mono", monospace; font-size: 10px; }
.layer { width: 299px; padding-left: 4px; gap: 2px; }
.layer .swatch { margin: 0 2px; }
.layer select { padding-left: 0; }
.swatch { width: 12px; height: 12px; background: #fff; border: 1px solid #000; flex: none; }
.cjk { padding-left: 6px; font-size: 12px; }
.c154 { width: 154px; margin-left: 2px; }
.c169 { width: 169px; margin-left: 2px; }
.c123 { width: 123px; }
.c117 { width: 117px; padding-left: 3px; }
.off { color: #8b929c; }
.off::after { border-top-color: #a5a5a5; }
.ltype { width: 62px; height: 1px; background: #fff; }
.lwt { width: 38px; height: 12px; background: #fff; flex: none; }
.lwt + select { padding-right: 0; }

.main { flex: 1; min-height: 0; display: grid; grid-template-columns: minmax(0, 1fr) 227px 282px; margin-top: 3px; }
.left { display: flex; flex-direction: column; min-width: 0; min-height: 0; padding-right: 4px; }
.work { flex: 1; display: flex; min-height: 0; }
.vbar { width: 28px; background: #434b57; border-left: 1px solid #9fa9c0; padding-bottom: 5px; align-self: flex-start; flex: none; }
.vbar button { width: 24px; height: 23px; }
.hgrip { display: block; height: 6px; border: solid #9fa9c0; border-width: 2px 0; margin-bottom: 1px; }
.vcol { padding-left: 2px; }
.doc { flex: 1; display: flex; flex-direction: column; margin-left: 2px; min-width: 0; }
.doctabs { height: 23px; background: #2b2d31; display: flex; padding-left: 1px; gap: 2px; flex: none; }
.dlist { width: 10px; background: #505c68; font-size: 9px; }
.dtab { width: 173px; background: #536783; display: flex; align-items: center; padding-left: 2px; gap: 1px; font: bold 12px "Liberation Mono", monospace; }
.dtab button { margin-left: auto; width: 20px; }
.dnew { width: 29px; background: #3f4550; }
.canvas { flex: 1; background: #222830; position: relative; overflow: hidden; }
.drawing { width: 100%; height: 100%; display: block; fill: none; stroke: #fff; }
.drawing text { font: 300 26px "Open Sans", sans-serif; fill: #fff; stroke: none; text-anchor: middle; }
.mdi { position: absolute; right: 7px; top: 6px; display: flex; gap: 4px; }
.layouts { height: 15px; background: #2b2d31; display: flex; gap: 2px; padding-left: 1px; font-size: 11px; line-height: 13px; flex: none; }
.layouts button { background: #3f4550; }
.layouts .s { width: 14px; }
.layouts .g .i { stroke: #8d98a8; }
.layouts .lt { width: 51px; padding-bottom: 3px; }
.layouts .on { width: 47px; background: #536783; font-weight: bold; }
.layouts .plus { width: 30px; }

.command { height: 149px; margin: 4px 0 0 1px; display: flex; flex: none; gap: 2px; color: #a9b3c3; }
.cclose { width: 20px; background: #454b5a; align-items: flex-start; padding-top: 1px; color: #747b87; font-size: 12px; }
.cbody { flex: 1; background: #2b2e33; display: grid; grid-template-columns: minmax(0, 1fr) 16px; grid-template-rows: 127px 1fr; font: 300 16px/18px "Noto Sans CJK SC", sans-serif; }
.cbody b { font: 13px/16px "Liberation Mono", monospace; white-space: pre; }
.chist { border-bottom: 1px solid #505c68; white-space: nowrap; overflow: hidden; }
.chist p { height: 18px; line-height: 16px; }
.cscroll, .tscroll, .bigscroll { background: #383c43; display: flex; flex-direction: column; align-items: center; justify-content: space-between; }
.cscroll .i, .tscroll .i, .bigscroll .i { stroke: #8b949f; height: 18px; }
.cscroll { padding-top: 2px; border-bottom: 1px solid #505c68; }
.cscroll span { width: 14px; height: 17px; background: #55606b; margin-top: auto; }
.cprompt { grid-column: 1 / -1; display: flex; align-items: center; padding-bottom: 2px; }
.caret { width: 1px; height: 18px; background: #e0e0e0; margin-left: 10px; }
.cprompt input { flex: 1; background: none; border: 0; outline: 0; padding: 0 4px; }

.panel { background: #434c58; border: solid #2a2d32; border-width: 1px 2px 0; min-height: 0; overflow: hidden; }
.panel header { height: 22px; background: #505c68; display: flex; align-items: center; justify-content: space-between; padding: 0 6px 2px 11px; }
.panel h2 { font-weight: bold; font-size: 15px; line-height: 20px; }
.props { margin-right: 4px; }
.props header { padding-right: 4px; }
.selrow { height: 34px; display: flex; align-items: center; padding: 4px 0 0 9px; gap: 4px; }
.plain { background: none; width: 131px; height: 30px; border-bottom-color: #58636f; align-self: flex-end; }
.plain select { height: 28px; padding-top: 5px; }
.plain::after { top: 13px; right: 3px; }
.selrow button { width: 20px; height: 20px; border: 1px solid #525d69; margin-bottom: 2px; }
.sect { height: 50px; margin: 0 31px 0 8px; padding: 0 6px 1px 5px; display: flex; align-items: flex-end; justify-content: space-between; border-bottom: 1px solid #e6eaee; }
.sect.first { height: 48px; }
.sect h3 { font-weight: bold; }
.sect .tri { height: 14px; }
.props table { width: 180px; margin-left: 8px; border-collapse: separate; border-spacing: 0; table-layout: fixed; }
.props th, .props td { height: 25px; padding: 2px 0 0 4px; text-align: left; font-weight: normal; border-bottom: 1px solid #525d69; white-space: nowrap; line-height: 16px; color: #e3e8ee; vertical-align: middle; }
.props th { width: 67px; padding: 5px 0 0 5px; border-right: 1px solid #525d69; }
.props td i { display: inline-block; vertical-align: middle; margin-top: -2px; }
.props td .swatch { width: 10px; height: 10px; margin-right: 2px; }
.props .dim td { color: #8f99a5; }
.props .sel { background: #1e67a8; }
.props td .pline { width: 45px; height: 1px; background: #e6eaee; margin-right: 4px; }
.props td .pwt { width: 40px; height: 14px; background: #e1e6eb; margin-right: 3px; }
.props .lw .tri::before { border-width: 6px 6px 0; }

.calc { margin-right: 2px; }
.calc header { padding-left: 18px; }
.calcrow { display: flex; }
.calcbody { flex: 1; min-width: 0; padding: 10px 5px 0 10px; }
.cbtns { display: flex; gap: 6px; padding-left: 5px; }
.cbtns button { width: 20px; height: 20px; border: 1px solid #8f959c; }
.box { display: block; width: 100%; background: none; border: 1px solid #62676c; resize: none; outline: 0; }
.hist { height: 80px; margin-top: 15px; }
.expr { height: 20px; margin-top: 5px; }
.calc h3 { font-weight: bold; font-size: 15px; line-height: 16px; padding: 0 0 2px 2px; margin: 12px 0 0; white-space: nowrap; }
.calc h3.gap { margin-top: 19px; }
.keys { display: grid; grid-template-columns: repeat(5, 36px); gap: 7px 10px; padding-left: 10px; }
.keys button { height: 20px; border: 1px solid #9a9ea3; }
.vbtns { display: flex; gap: 5px; padding-left: 10px; }
.vbtns button { width: 20px; height: 20px; border: 1px solid transparent; position: relative; }
.vbtns .on { border-color: #9a9ea3; }
.calc em { font: italic 18px/16px "Liberation Serif", serif; color: #56aef0; }
.vbtns sup, .vbtns sub { position: absolute; right: 1px; top: 0; line-height: 10px; font-size: 11px; color: #f0b545; }
.vbtns sub { top: 9px; color: #aab2bb; }
.vbtns .dis em { color: #9aa3ad; }
.tree { display: flex; border: 1px solid #62676c; height: 140px; justify-content: space-between; overflow: hidden; }
.tree ul { list-style: none; flex: 1; }
.tree li { height: 20px; padding-left: 44px; display: flex; align-items: center; position: relative; }
.tree li em { width: 18px; }
.tree li .k { font-style: normal; font-weight: bold; font-size: 16px; }
.tree li:not(.root)::before { content: ""; position: absolute; left: 30px; top: -10px; width: 10px; height: 20px; border: dotted #66717c; border-width: 0 0 1px 1px; }
.tree .root { padding-left: 7px; gap: 4px; }
.root .i { margin-left: 2px; }
.minus { width: 9px; height: 9px; background: linear-gradient(#33408a, #33408a) center / 5px 1px no-repeat #e8e8e8; }
.tscroll { width: 16px; justify-content: flex-start; }
.tscroll span { width: 15px; height: 68px; background: #55606b; margin-bottom: auto; }
.dlabel { display: block; padding-left: 2px; line-height: 18px; height: 20px; }
.detail { height: 80px; width: calc(100% - 4px); margin-left: 2px; }
.calc h3.conv { margin-top: 31px; }
.unitrow { display: flex; height: 22px; align-items: center; padding-left: 7px; gap: 3px; }
.unitrow .len { border-left: 1px solid #5a6570; margin-left: 26px; padding-left: 6px; }
.bigscroll { width: 15px; margin: 30px 5px 0 0; justify-content: flex-start; height: 800px; }
.bigscroll span { width: 13px; height: 105px; background: #55606b; }

.status { height: 27px; display: flex; align-items: center; justify-content: space-between; position: relative; flex: none; }
.coords { width: 249px; margin-left: 10px; padding: 7px 0 0 1px; height: 25px; border-bottom: 1px solid #555b66; font: 10px/16px "Liberation Mono", monospace; }
.toggles { display: flex; gap: 4px; margin-right: auto; padding: 1px 0 0 4px; }
.toggles button { width: 20px; height: 21px; border: 1px solid transparent; }
.toggles .on { background: #50709a; border-color: #5ab4f8; }
.sright { display: flex; align-items: center; gap: 6px; color: #9aa3ad; }
.sright button { gap: 3px; }
.sright .tri { margin: 0 1px; }
.sizer { margin: 5px 0 0 -2px; }

.mark { position: absolute; right: 10px; bottom: 8px; display: flex; align-items: center; opacity: .85; pointer-events: none; }
.mark svg { width: 42px; height: 42px; }
.mark div { display: flex; flex-direction: column; }
.mark strong { font-size: 21px; line-height: 22px; color: #235d96; }
.mark span { font: bold 16px/18px "Liberation Sans", sans-serif; color: #287f4c; opacity: .8; }
.activate { position: absolute; right: 0; bottom: -6px; width: 79px; overflow: hidden; white-space: nowrap; font-size: 19px; line-height: 26px; color: #a5a8ab; pointer-events: none; }
```
